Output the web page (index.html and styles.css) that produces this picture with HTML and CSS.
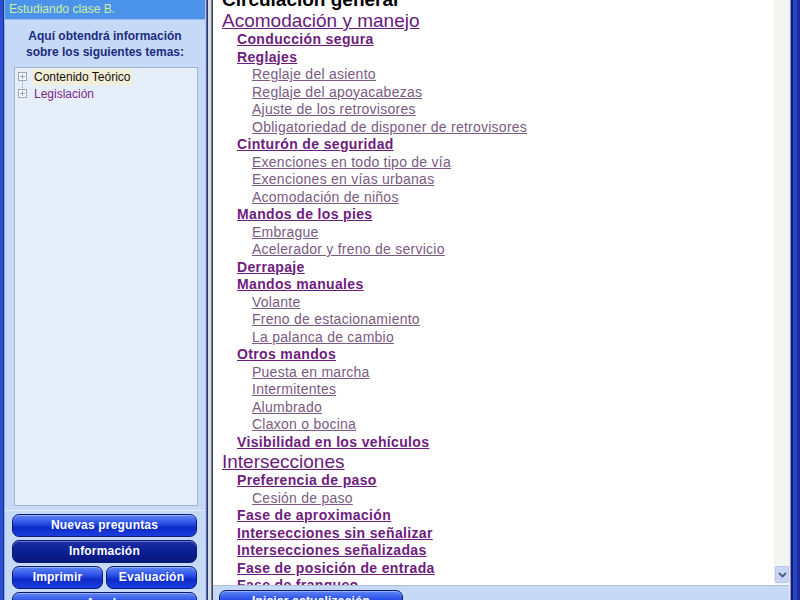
FILE: index.html
```html
<!DOCTYPE html>
<html lang="es">
<head>
<meta charset="utf-8">
<title>Estudiando clase B.</title>
<link rel="stylesheet" href="styles.css">
</head>
<body>
<div class="app">
  <div class="frame-left"></div>
  <aside class="sidebar">
    <div class="status">Estudiando clase B.</div>
    <div class="intro">Aquí obtendrá información<br>sobre los siguientes temas:</div>
    <div class="tree">
      <div class="node"><span class="plus"></span><span class="label sel">Contenido Teórico</span></div>
      <div class="node"><span class="plus"></span><span class="label visited">Legislación</span></div>
    </div>
    <div class="buttons">
      <div class="btn">Nuevas preguntas</div>
      <div class="btn active">Información</div>
      <div class="btn-row">
        <div class="btn">Imprimir</div>
        <div class="btn">Evaluación</div>
      </div>
      <div class="btn">Ayuda</div>
    </div>
  </aside>
  <div class="divider"></div>
  <main class="main">
    <div class="viewport">
      <div class="content">
        <div class="h0">Circulación general</div>
        <a class="h1">Acomodación y manejo</a>
        <a class="l2">Conducción segura</a>
        <a class="l2">Reglajes</a>
        <a class="l3">Reglaje del asiento</a>
        <a class="l3">Reglaje del apoyacabezas</a>
        <a class="l3">Ajuste de los retrovisores</a>
        <a class="l3">Obligatoriedad de disponer de retrovisores</a>
        <a class="l2">Cinturón de seguridad</a>
        <a class="l3">Exenciones en todo tipo de vía</a>
        <a class="l3">Exenciones en vías urbanas</a>
        <a class="l3">Acomodación de niños</a>
        <a class="l2">Mandos de los pies</a>
        <a class="l3">Embrague</a>
        <a class="l3">Acelerador y freno de servicio</a>
        <a class="l2">Derrapaje</a>
        <a class="l2">Mandos manuales</a>
        <a class="l3">Volante</a>
        <a class="l3">Freno de estacionamiento</a>
        <a class="l3">La palanca de cambio</a>
        <a class="l2">Otros mandos</a>
        <a class="l3">Puesta en marcha</a>
        <a class="l3">Intermitentes</a>
        <a class="l3">Alumbrado</a>
        <a class="l3">Claxon o bocina</a>
        <a class="l2">Visibilidad en los vehículos</a>
        <a class="h1">Intersecciones</a>
        <a class="l2">Preferencia de paso</a>
        <a class="l3">Cesión de paso</a>
        <a class="l2">Fase de aproximación</a>
        <a class="l2">Intersecciones sin señalizar</a>
        <a class="l2">Intersecciones señalizadas</a>
        <a class="l2">Fase de posición de entrada</a>
        <a class="l2">Fase de franqueo</a>
      </div>
      <div class="scrollbar">
        <div class="track"></div>
        <div class="arrow">
          <svg width="9" height="6" viewBox="0 0 9 6"><path d="M1 1 L4.5 4.5 L8 1" fill="none" stroke="#4a5d8a" stroke-width="1.8"/></svg>
        </div>
      </div>
    </div>
    <div class="bottombar">
      <div class="btn update">Iniciar actualización</div>
    </div>
  </main>
  <div class="frame-right"></div>
</div>
</body>
</html>
```
FILE: styles.css
```css
html, body {
  margin: 0;
  padding: 0;
  width: 800px;
  height: 600px;
  overflow: hidden;
  background: #c6daf7;
}
.app {
  display: flex;
  width: 800px;
  height: 600px;
  font-family: "Liberation Sans", Arial, sans-serif;
}
.frame-left {
  width: 5px;
  background: linear-gradient(to right, #2a4fd0 0, #2a4fd0 3px, #1b2f96 3px, #1b2f96 4px, #8fb0ee 4px);
}
.sidebar {
  width: 200px;
  height: 600px;
  overflow: hidden;
  display: flex;
  flex-direction: column;
  background: #c6daf7;
}
.sidebar > * {
  flex-shrink: 0;
}
.status {
  height: 19px;
  line-height: 19px;
  background: #4b93ea;
  color: #cdeea4;
  font-size: 12px;
  padding-left: 4px;
  border-bottom: 1px solid #9ec2f2;
}
.intro {
  text-align: center;
  font-weight: bold;
  font-size: 12px;
  line-height: 16px;
  color: #1c2b7e;
  padding-top: 8px;
  height: 39px;
}
.tree {
  margin: 0 7px 0 9px;
  height: 437px;
  background: #e6eefa;
  border: 1px solid #a4b4cc;
}
.node {
  display: flex;
  align-items: center;
  height: 17px;
  font-size: 12px;
  position: relative;
}
.node:first-child::after {
  content: "";
  position: absolute;
  left: 7px;
  top: 12px;
  height: 14px;
  border-left: 1px dotted #9aa4b4;
}
.plus {
  width: 7px;
  height: 7px;
  margin-left: 3px;
  margin-right: 6px;
  border: 1px solid #9aa8bc;
  background: linear-gradient(#a0a8b8, #a0a8b8) center/5px 1px no-repeat,
              linear-gradient(#a0a8b8, #a0a8b8) center/1px 5px no-repeat, #fbfbfb;
  position: relative;
  z-index: 1;
}
.label {
  padding: 0 1px;
  line-height: 16px;
}
.label.sel {
  background: #f3eed6;
  color: #111;
}
.label.visited {
  color: #7a2a86;
}
.buttons {
  margin-top: 4px;
  border-top: 1px solid #e4eefc;
  padding: 3px 8px 0 7px;
  display: flex;
  flex-direction: column;
  gap: 3px;
}
.buttons > * {
  flex-shrink: 0;
}
.btn-row {
  display: flex;
  gap: 3px;
}
.btn-row .btn {
  flex: 1;
}
.btn {
  height: 21px;
  line-height: 21px;
  border: 1px solid #0c1a6e;
  border-radius: 7px;
  background: linear-gradient(to bottom, #5f86f6 0%, #2b4fe6 40%, #0d2ac6 60%, #1c3ee0 100%);
  color: #fff;
  font-weight: bold;
  font-size: 12px;
  text-align: center;
  box-shadow: inset 0 1px 0 rgba(255,255,255,0.35);
  letter-spacing: 0.2px;
}
.btn.active {
  background: linear-gradient(to bottom, #1a2ea8 0%, #0c1f94 50%, #081880 100%);
}
.divider {
  width: 8px;
  background: linear-gradient(to right, #b8c6e4 0, #b8c6e4 1px, #5a6aa8 1px, #5a6aa8 2px, #2b3670 2px, #2b3670 3px, #d8dce6 3px, #d8dce6 6px, #777c90 6px, #777c90 7px, #3a3f52 7px);
}
.main {
  width: 576px;
  display: flex;
  flex-direction: column;
}
.viewport {
  height: 585px;
  flex-shrink: 0;
  display: flex;
  background: #fff;
  overflow: hidden;
}
.content {
  flex: 1;
  display: flex;
  flex-direction: column;
  align-items: flex-start;
  padding-left: 9px;
  margin-top: -10px;
}
.content a {
  text-decoration: underline;
  cursor: pointer;
  white-space: nowrap;
}
.h0 {
  font-size: 19px;
  font-weight: bold;
  line-height: 20px;
  color: #000;
}
.h1 {
  font-size: 19px;
  line-height: 21px;
  color: #6a1a7c;
}
.l2 {
  font-size: 14px;
  font-weight: bold;
  line-height: 17.5px;
  color: #6e1c7e;
  margin-left: 15px;
  letter-spacing: 0.35px;
}
.l3 {
  font-size: 14px;
  line-height: 17.5px;
  color: #7a5b82;
  margin-left: 30px;
  letter-spacing: 0.25px;
}
.scrollbar {
  width: 14px;
  display: flex;
  flex-direction: column;
  background: #f4f4f1;
  border-left: 1px solid #eeeeea;
}
.track {
  flex: 1;
}
.arrow {
  height: 15px;
  margin-bottom: 2px;
  background: #c9d5f5;
  border: 1px solid #b7c5ea;
  border-radius: 2px;
  display: flex;
  align-items: center;
  justify-content: center;
}
.bottombar {
  height: 15px;
  flex-shrink: 0;
  background: #c6daf7;
  border-top: 1px solid #b4c0d4;
  padding-left: 6px;
  overflow: hidden;
}
.btn.update {
  width: 182px;
  margin-top: 4px;
}
.frame-right {
  width: 11px;
  background: linear-gradient(to right, #e6eaf4 0, #e6eaf4 1px, #8a94c8 1px, #8a94c8 2px, #121c6c 2px, #121c6c 4px, #2a44c8 4px, #2a44c8 8px, #1a2c9c 8px);
}
```
